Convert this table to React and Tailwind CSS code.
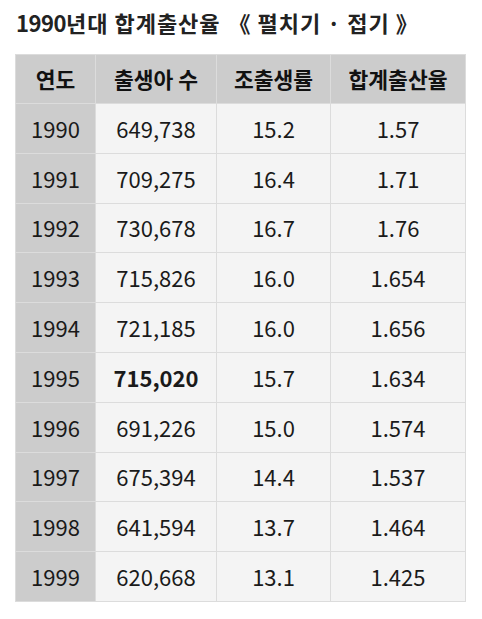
import React from 'react';

const rows = [
  ['1990', '649,738', '15.2', '1.57'],
  ['1991', '709,275', '16.4', '1.71'],
  ['1992', '730,678', '16.7', '1.76'],
  ['1993', '715,826', '16.0', '1.654'],
  ['1994', '721,185', '16.0', '1.656'],
  ['1995', '715,020', '15.7', '1.634', true],
  ['1996', '691,226', '15.0', '1.574'],
  ['1997', '675,394', '14.4', '1.537'],
  ['1998', '641,594', '13.7', '1.464'],
  ['1999', '620,668', '13.1', '1.425'],
];

const font = { fontFamily: '"Noto Sans CJK KR", "Noto Sans", sans-serif' };

export default function App() {
  return (
    <div className="w-[482px] h-[619px] bg-white pt-[7px] pl-[15px]" style={font}>
      {/* Title */}
      <h2 className="text-[22px] font-bold text-[#222] leading-[30px] pl-[1px] tracking-[1px]">
        <span className="tracking-[-0.5px]">1990</span>년대 합계출산율 <span className="ml-[2px]">《 펼치기 · 접기 》</span>
      </h2>

      {/* Table */}
      <table className="mt-[17px] w-[450px] border-collapse table-fixed">
        <colgroup>
          <col className="w-[80px]" />
          <col className="w-[121px]" />
          <col className="w-[114px]" />
          <col className="w-[135px]" />
        </colgroup>
        <thead>
          <tr className="h-[49px] bg-[#cccccc]">
            {['연도', '출생아 수', '조출생률', '합계출산율'].map((h) => (
              <th key={h} className="border border-[#dcdcdc] text-[21.5px] font-bold text-[#111] text-center">
                {h}
              </th>
            ))}
          </tr>
        </thead>
        <tbody>
          {rows.map(([y, b, c, t, bold]) => (
            <tr key={y} className="h-[49.8px]">
              <td className="border border-[#dcdcdc] bg-[#cccccc] text-center text-[22px] text-[#1a1a1a]">{y}</td>
              <td className={`border border-[#dcdcdc] bg-[#f4f4f4] text-center text-[22px] text-[#1a1a1a] ${bold ? 'font-bold' : ''}`}>{b}</td>
              <td className="border border-[#dcdcdc] bg-[#f4f4f4] text-center text-[22px] text-[#1a1a1a]">{c}</td>
              <td className="border border-[#dcdcdc] bg-[#f4f4f4] text-center text-[22px] text-[#1a1a1a]">{t}</td>
            </tr>
          ))}
        </tbody>
      </table>
    </div>
  );
}
